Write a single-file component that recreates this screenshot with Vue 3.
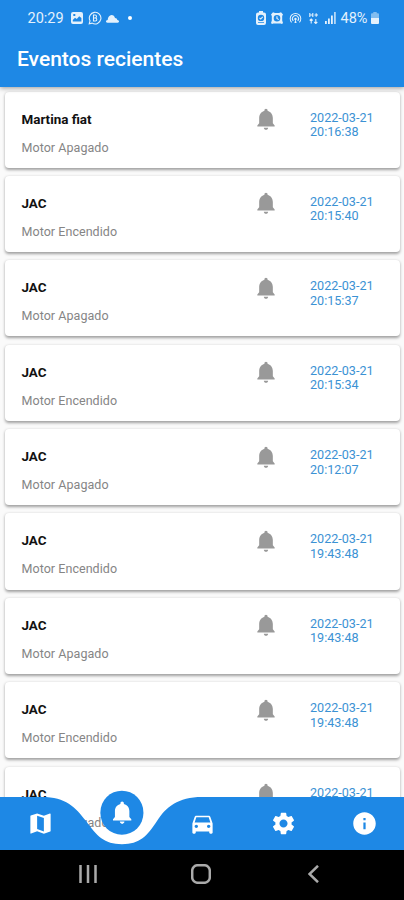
<template>
  <div class="phone">

    <!-- HEADER -->
    <header class="header">
      <div class="status">
        <div class="status-left">
          <span class="clock">20:29</span>
          <svg class="s-image" viewBox="0 0 12 12">
            <path fill-rule="evenodd" d="M2 0h8a2 2 0 0 1 2 2v8a2 2 0 0 1-2 2H2a2 2 0 0 1-2-2V2a2 2 0 0 1 2-2zM1.8 9.5h8.6V6L8.2 4.2 5.8 7 4 5.8 1.8 8zM2.3 2v2h2V2z" />
          </svg>
          <svg class="s-whats" viewBox="0 0 14 14">
            <path class="line" d="M1.2 12.8l.8-3A5.8 5.8 0 1 1 4.200 12.100z" />
            <path class="line" d="M5.500 4v6h1.800a1.500 1.500 0 0 0 0-3H5.500h1.500a1.400 1.400 0 0 0 0-3z" />
          </svg>
          <svg class="s-cloud" viewBox="0 0 14 9">
            <path d="M1.500 9C.6 9 0 8.500 0 7.700 0 6.900.7 6.300 1.800 6.200 2 3 3.700.7 6 .7c1.900 0 3.200 1.300 3.700 3.300 1.500 0 2.300.9 2.500 2.200C13.400 6.400 14 7 14 7.800 14 8.500 13.500 9 12.600 9z" />
          </svg>
          <span class="dot"></span>
        </div>

        <div class="status-right">
          <svg class="s-saver" viewBox="0 0 10 14">
            <path fill-rule="evenodd" d="M3 0h4v1.500h1A2 2 0 0 1 10 3.500V12a2 2 0 0 1-2 2H2a2 2 0 0 1-2-2V3.500a2 2 0 0 1 2-2h1zM5 3.700a3.200 3.200 0 1 0 0 6.400 3.200 3.200 0 0 0 0-6.400zM2 11.200V12h6v-.8z" />
            <path class="line" d="M3.500 6.800l1.200 1.200 2-2.200" />
          </svg>
          <svg class="s-alarm" viewBox="0 0 12 12">
            <path fill-rule="evenodd" d="M0 2.500L2 .3 4 1h4l2-.7 2 2.200-.8 1.500v4.500L12 11l-1 1-1.500-.6h-7L1 12l-1-1 .8-2.500V4zM6 3a3.300 3.300 0 1 0 0 6.600A3.300 3.300 0 0 0 6 3zM5.400 4.200h1.100v2l1.500 1-.5.800-2.100-1.300z" />
          </svg>
          <svg class="s-hotspot" viewBox="0 0 14 12">
            <path class="line" d="M2.800 10.700A5.700 5.700 0 1 1 11.200 10.700M4.600 9A3.300 3.300 0 1 1 9.400 9" />
            <circle cx="7" cy="7" r="1.300" />
            <path d="M5.800 11.500L7 7l1.200 4.500z" />
          </svg>
          <svg class="s-data" viewBox="0 0 9 12">
            <path class="line" d="M.8 1v4M3.800 1v4M.8 3h3M5.500 3H9M7.200 1.300v3.500M2.200 7v4.500M.7 8.500L2.200 7l1.500 1.500M6.800 7v4.500M5.300 10l1.500 1.500L8.300 10" />
          </svg>
          <svg class="s-signal" viewBox="0 0 11 12">
            <path d="M0 9h1.800v3H0zM3 6.500h1.800V12H3zM6 3.500h1.800V12H6z" />
            <path opacity=".75" d="M9 0h1.800v12H9z" />
          </svg>
          <span class="percent">48%</span>
          <svg class="s-battery" viewBox="0 0 8 12">
            <path opacity=".5" d="M2.300 0h3.400v1.300H7a1 1 0 0 1 1 1V6H0V2.300a1 1 0 0 1 1-1h1.300z" />
            <path d="M0 6h8v5a1 1 0 0 1-1 1H1a1 1 0 0 1-1-1z" />
          </svg>
        </div>
      </div>

      <h1 class="title">Eventos recientes</h1>
    </header>

    <!-- EVENT LIST -->
    <main class="events">
      <article v-for="(item, i) in events" :key="i" class="card">
        <div class="info">
          <h2>{{ item.name }}</h2>
          <p>{{ item.status }}</p>
        </div>
        <svg class="bell" viewBox="0 0 24 24"><path :d="icons.bell" /></svg>
        <time class="date">2022-03-21<br />{{ item.time }}</time>
      </article>

      <!-- BOTTOM NAV -->
      <nav class="nav">
        <svg class="nav-bg" viewBox="0 0 404 53">
          <path d="M0 0H42C66 0 75 10 86 24C97 39 104 47.200 122 47.200C140 47.200 147 39 157 24C166 10 178 0 202 0H404V53H0Z" />
        </svg>
        <a
          v-for="tab in tabs"
          :key="tab"
          class="tab"
          :class="{ active: tab === 'bell' }"
        >
          <svg viewBox="0 0 24 24"><path :d="icons[tab]" /></svg>
        </a>
      </nav>
    </main>

    <!-- SYSTEM BUTTONS -->
    <footer class="system">
      <svg class="sys-recent" viewBox="0 0 18 18"><path d="M1.500 0v18M9 0v18M16.500 0v18" /></svg>
      <svg class="sys-home" viewBox="0 0 20 20"><rect x="1.200" y="1.200" width="17.600" height="17.600" rx="5.500" /></svg>
      <svg class="sys-back" viewBox="0 0 11 18"><path d="M10 .8L1.500 9l8.500 8.200" /></svg>
    </footer>

  </div>
</template>

<script setup>
const events = [
  { name: 'Martina fiat', status: 'Motor Apagado', time: '20:16:38' },
  { name: 'JAC', status: 'Motor Encendido', time: '20:15:40' },
  { name: 'JAC', status: 'Motor Apagado', time: '20:15:37' },
  { name: 'JAC', status: 'Motor Encendido', time: '20:15:34' },
  { name: 'JAC', status: 'Motor Apagado', time: '20:12:07' },
  { name: 'JAC', status: 'Motor Encendido', time: '19:43:48' },
  { name: 'JAC', status: 'Motor Apagado', time: '19:43:48' },
  { name: 'JAC', status: 'Motor Encendido', time: '19:43:48' },
  { name: 'JAC', status: 'Motor Apagado', time: '19:43:48' }
]

const tabs = ['map', 'bell', 'car', 'gear', 'info']

const icons = {
  map: 'M20.5 3l-.16.03L15 5.1 9 3 3.360 4.900c-.21.07-.36.25-.36.480V20.500c0 .28.22.5.5.5l.16-.03L9 18.900l6 2.100 5.640-1.900c.21-.07.36-.25.36-.48V3.500c0-.28-.22-.5-.5-.5zM15 19l-6-2.110V5l6 2.110V19z',
  bell: 'M12 22c1.100 0 2-.9 2-2h-4c0 1.100.89 2 2 2zm6.300-6v-5c0-3.070-1.800-5.640-4.800-6.320V4c0-.83-.67-1.500-1.500-1.500s-1.500.67-1.500 1.500v.68C7.500 5.360 5.700 7.920 5.700 11v5L4 18v1h16v-1l-1.700-2z',
  car: 'M18.920 6.010C18.720 5.420 18.160 5 17.500 5h-11c-.66 0-1.210.42-1.420 1.010L3 12v8c0 .55.45 1 1 1h1c.55 0 1-.45 1-1v-1h12v1c0 .55.45 1 1 1h1c.55 0 1-.45 1-1v-8l-2.080-5.990zM6.500 16c-.83 0-1.500-.67-1.500-1.500S5.670 13 6.500 13s1.500.67 1.500 1.500S7.330 16 6.500 16zm11 0c-.83 0-1.500-.67-1.500-1.500s.67-1.500 1.500-1.500 1.500.67 1.500 1.500-.67 1.500-1.500 1.500zM5 11l1.500-4.500h11L19 11H5z',
  gear: 'M19.140 12.940c.04-.3.06-.61.06-.94 0-.32-.02-.64-.07-.94l2.030-1.580c.18-.14.23-.41.12-.61l-1.920-3.320c-.12-.22-.37-.29-.59-.22l-2.390.96c-.5-.38-1.030-.7-1.620-.94l-.36-2.540c-.04-.24-.24-.41-.48-.41h-3.840c-.24 0-.43.17-.47.41l-.36 2.540c-.59.24-1.130.57-1.620.94l-2.390-.96c-.22-.08-.47 0-.59.22L2.740 8.870c-.12.21-.08.47.12.61l2.030 1.580c-.05.3-.09.63-.09.94s.02.64.07.94l-2.030 1.580c-.18.14-.23.41-.12.61l1.920 3.320c.12.22.37.29.59.22l2.390-.96c.5.38 1.030.7 1.620.94l.36 2.540c.05.24.24.41.48.41h3.840c.24 0 .44-.17.47-.41l.36-2.540c.59-.24 1.130-.56 1.620-.94l2.390.96c.22.08.47 0 .59-.22l1.920-3.320c.12-.22.07-.47-.12-.61l-2.010-1.580zM12 15.600c-1.980 0-3.600-1.620-3.600-3.600s1.620-3.600 3.600-3.600 3.600 1.620 3.600 3.600-1.620 3.600-3.600 3.600z',
  info: 'M12 2C6.480 2 2 6.480 2 12s4.480 10 10 10 10-4.480 10-10S17.520 2 12 2zm1 15h-2v-6h2v6zm0-8h-2V7h2v2z'
}
</script>

<style>
body {
  margin: 0;
}
</style>

<style scoped>
.phone {
  display: flex;
  flex-direction: column;
  width: 404px;
  height: 900px;
  overflow: hidden;
  background: #fafafa;
  font-family: Roboto, "Liberation Sans", sans-serif;
}

svg {
  display: block;
  flex: none;
}

/* HEADER */
.header {
  position: relative;
  z-index: 2;
  flex: none;
  height: 87px;
  background: #1e88e5;
  box-shadow: 0 1px 5px rgba(0, 0, 0, 0.4);
  color: #fff;
}

.status {
  display: flex;
  align-items: center;
  justify-content: space-between;
  height: 36px;
  padding: 0 25.5px 0 27.5px;
  color: #e4f1fc;
  fill: #e4f1fc;
}

.status-left,
.status-right {
  display: flex;
  align-items: center;
}

.status .line {
  fill: none;
  stroke: #e4f1fc;
  stroke-width: 1.1;
}

.clock {
  width: 43px;
  font-size: 14.5px;
}

.s-image {
  width: 12px;
  height: 12px;
  margin-right: 5px;
}

.s-whats {
  width: 14px;
  height: 14px;
  margin-right: 4px;
}

.s-cloud {
  width: 13px;
  height: 9px;
}

.dot {
  width: 4px;
  height: 4px;
  margin-left: 9.5px;
  border-radius: 50%;
  background: #fff;
}

.s-saver {
  width: 10px;
  height: 14px;
  margin-right: 5px;
}

.s-alarm {
  width: 12px;
  height: 12px;
  margin-right: 6px;
}

.s-hotspot {
  width: 13px;
  height: 12px;
  margin-right: 7px;
}

.s-data {
  width: 9px;
  height: 12px;
  margin-right: 7px;
}

.s-signal {
  width: 11px;
  height: 12px;
  margin-right: 5px;
}

.percent {
  width: 30px;
  font-size: 14.5px;
}

.s-battery {
  width: 8px;
  height: 12px;
}

.title {
  margin: 0;
  padding: 10px 0 0 17px;
  font-size: 21px;
  font-weight: 500;
  line-height: 26px;
}

/* EVENT LIST */
.events {
  position: relative;
  flex: 1;
  min-height: 0;
  overflow: hidden;
  padding: 4.5px 4px 0 5px;
}

.card {
  display: flex;
  box-sizing: border-box;
  height: 76.2px;
  margin-bottom: 8.2px;
  padding: 0 0 0 16.5px;
  border-radius: 4px;
  background: #fff;
  box-shadow: 0 1.5px 3px rgba(0, 0, 0, 0.36);
}

.card:nth-of-type(9) {
  height: 84px;
}

.info {
  width: 231px;
  padding-top: 19px;
}

.info h2 {
  margin: 0;
  color: #111;
  font-size: 13.4px;
  font-weight: 700;
  line-height: 18px;
}

.info p {
  margin: 10px 0 0;
  color: #858585;
  font-size: 12.5px;
  letter-spacing: 0.05px;
  line-height: 18px;
}

.bell {
  width: 26px;
  height: 26px;
  margin-top: 14.5px;
  fill: #999;
}

.date {
  margin: 19px 0 0 31.5px;
  color: #3b92d4;
  font-size: 12.6px;
  line-height: 14.5px;
}

/* BOTTOM NAV */
.nav {
  position: absolute;
  left: 0;
  right: 0;
  bottom: 0;
  display: flex;
  height: 53px;
}

.nav-bg {
  position: absolute;
  inset: 0;
  width: 404px;
  height: 53px;
  fill: #1e88e5;
}

.tab {
  position: relative;
  display: flex;
  flex: 1;
  align-items: center;
  justify-content: center;
  padding: 0.5px 0 0 1px;
}

.tab svg {
  width: 27px;
  height: 27px;
  fill: #fff;
}

.tab.active svg {
  box-sizing: border-box;
  width: 43.5px;
  height: 43.5px;
  padding: 8px;
  border-radius: 50%;
  background: #1e88e5;
  transform: translate(0.4px, -11.3px);
}

/* SYSTEM BUTTONS */
.system {
  display: flex;
  flex: none;
  align-items: center;
  height: 50px;
  padding: 0 0 2px 79px;
  box-sizing: border-box;
  background: #000;
  fill: none;
  stroke: #aaa;
  stroke-width: 2.5;
}

.sys-recent {
  width: 18px;
  height: 18px;
}

.sys-home {
  width: 20px;
  height: 20px;
  margin-left: 93.5px;
}

.sys-back {
  width: 11px;
  height: 18px;
  margin-left: 97px;
}
</style>
